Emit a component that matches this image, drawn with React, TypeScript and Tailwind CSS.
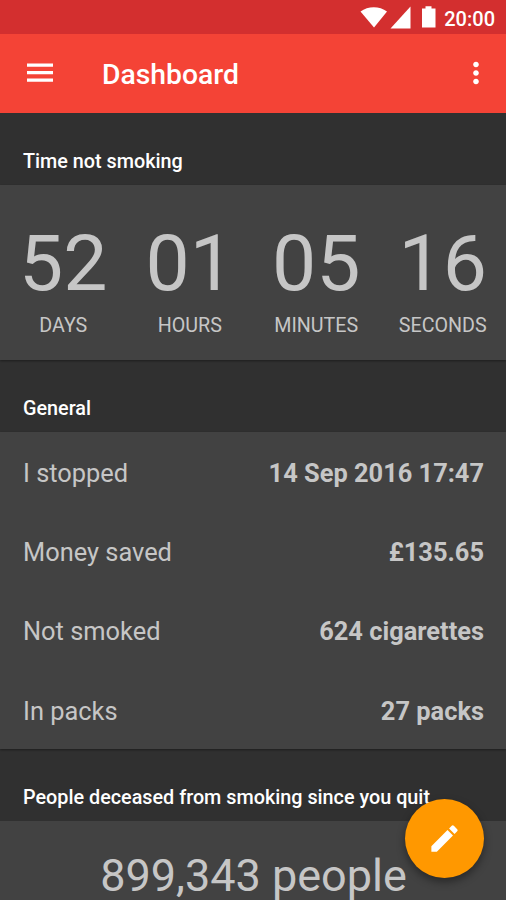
import { MdEdit, MdMoreVert } from 'react-icons/md';

type SectionTitleProps = {
  title: string;
};

const counters = [
  { value: '52', label: 'DAYS' },
  { value: '01', label: 'HOURS' },
  { value: '05', label: 'MINUTES' },
  { value: '16', label: 'SECONDS' },
];

const stats = [
  { label: 'I stopped', value: '14 Sep 2016 17:47' },
  { label: 'Money saved', value: '£135.65' },
  { label: 'Not smoked', value: '624 cigarettes' },
  { label: 'In packs', value: '27 packs' },
];

function StatusBar() {
  return (
    <div className="flex h-[34px] items-center justify-end bg-[#d32f2f] pr-[11px] text-white">
      <svg className="h-[34px] w-[84px]" viewBox="0 0 84 34" fill="currentColor">
        <path d="M0.5 11.5C8 5.8 19.500 5.800 27 11.500L14 27.500Z" />
        <path d="M50.500 6.500V28.500H30.500Z" />
        <path d="M63 8.500H65.500V6.300H71.500V8.500H75.500V27.500H62V8.500Z" />
      </svg>
      <span className="pt-[3px] text-[20px] font-medium leading-none">20:00</span>
    </div>
  );
}

function Toolbar() {
  return (
    <header className="flex h-[78.5px] items-center bg-[#f44336] pl-[23px] pr-[13px] text-white">
      <svg className="size-[34px]" viewBox="0 0 34 34" fill="currentColor">
        <path d="M4 7.500H30V10.700H4ZM4 15H30V18.200H4ZM4 22.500H30V25.700H4Z" />
      </svg>
      <h1 className="ml-[45px] flex-1 pt-1 text-[28.3px] font-medium">Dashboard</h1>
      <MdMoreVert className="size-[34px]" />
    </header>
  );
}

function SectionTitle({ title }: SectionTitleProps) {
  return (
    <h2 className="flex h-[72px] items-end px-[23px] pb-2 text-[19.8px] font-medium leading-[30px] text-white">
      {title}
    </h2>
  );
}

export default function App() {
  return (
    <div className="relative h-[900px] w-[506px] overflow-hidden bg-[#303030] font-['Roboto',sans-serif] text-[#c6c6c6]">
      <StatusBar />
      <Toolbar />

      {/* Timer */}
      <SectionTitle title="Time not smoking" />
      <div className="grid h-[175px] grid-cols-4 bg-[#424242] pt-[38px] text-center shadow-[0_1px_2px_rgba(0,0,0,0.4)]">
        {counters.map((counter) => (
          <div key={counter.label}>
            <p className="text-[78.7px] leading-[80px]">{counter.value}</p>
            <p className="mt-2 text-[19.7px] leading-[30px]">{counter.label}</p>
          </div>
        ))}
      </div>

      {/* General stats */}
      <SectionTitle title="General" />
      <div className="h-[317.5px] bg-[#424242] pl-[23px] pr-[22px] shadow-[0_1px_2px_rgba(0,0,0,0.4)]">
        {stats.map((stat) => (
          <div key={stat.label} className="flex h-[79.4px] items-center justify-between pt-[3px] text-[25.4px]">
            <span>{stat.label}</span>
            <span className="font-bold">{stat.value}</span>
          </div>
        ))}
      </div>

      {/* Deceased */}
      <SectionTitle title="People deceased from smoking since you quit" />
      <div className="h-[120px] bg-[#424242] pl-px pt-[25px] text-center text-[45px] leading-[60px]">
        899,343 people
      </div>

      <button className="absolute bottom-[22px] right-[22px] flex size-[79px] items-center justify-center rounded-full bg-[#ff9800] text-white shadow-[0_4px_8px_rgba(0,0,0,0.4)]">
        <MdEdit className="size-[35px]" />
      </button>
    </div>
  );
}
